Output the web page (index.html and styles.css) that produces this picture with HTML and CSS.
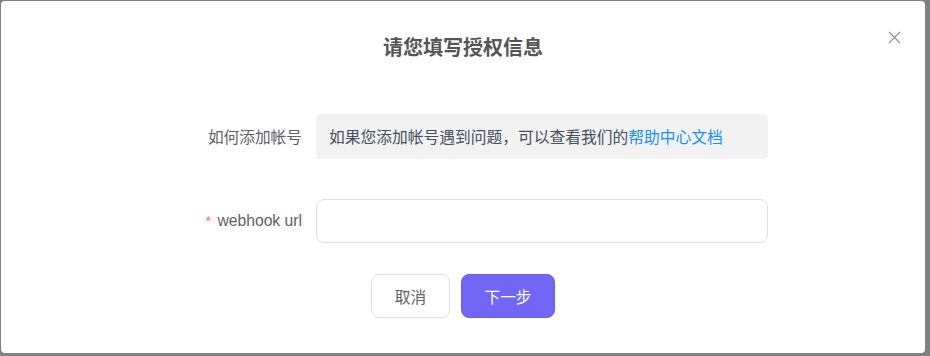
FILE: index.html
```html
<!DOCTYPE html>
<html lang="zh-CN">
<head>
    <meta charset="UTF-8">
    <meta name="viewport" content="width=device-width, initial-scale=1.0">
    <title>授权信息</title>
    <link rel="stylesheet" href="styles.css">
</head>
<body>
    <div class="modal">
        <div class="modal-header">
            <h2 class="modal-title">请您填写授权信息</h2>
            <button class="close-button" aria-label="关闭">
                <svg width="13" height="13" viewBox="0 0 13 13">
                    <path d="M1 1 L12 12 M12 1 L1 12" stroke="#909399" stroke-width="1.2" fill="none"/>
                </svg>
            </button>
        </div>

        <div class="form">
            <div class="form-row">
                <div class="form-label">如何添加帐号</div>
                <div class="help-box">
                    如果您添加帐号遇到问题，可以查看我们的<a href="#" class="help-link">帮助中心文档</a>
                </div>
            </div>
            <div class="form-row">
                <div class="form-label"><span class="required">*</span> webhook url</div>
                <input class="form-input" type="text">
            </div>
        </div>

        <div class="modal-footer">
            <button class="cancel-button">取消</button>
            <button class="next-button">下一步</button>
        </div>
    </div>
</body>
</html>
```

FILE: styles.css
```css
body {
    margin: 0;
    padding: 1px 0 0 1px;
    background: #808080;
    font-family: "Liberation Sans", "Noto Sans CJK SC", sans-serif;
    height: 100vh;
    box-sizing: border-box;
    overflow: hidden;
}

.modal {
    width: 924px;
    height: 352px;
    background: white;
    border-radius: 4px;
    box-sizing: border-box;
    padding-top: 28px;
}

.modal-header {
    position: relative;
    text-align: center;
}

.modal-title {
    margin: 0;
    font-size: 20px;
    line-height: 38px;
    font-weight: 700;
    color: #555;
}

.close-button {
    position: absolute;
    top: 2px;
    right: 24px;
    background: none;
    border: none;
    padding: 0;
    cursor: pointer;
}

.form {
    margin-top: 47px;
    padding-left: 181px;
    display: flex;
    flex-direction: column;
    gap: 40px;
}

.form-row {
    display: flex;
    align-items: center;
    gap: 14px;
}

.form-label {
    width: 120px;
    text-align: right;
    font-size: 15.7px;
    color: #606266;
    white-space: nowrap;
}

.required {
    color: #f56c6c;
    font-size: 14px;
    margin-right: 2px;
}

.help-box {
    width: 452px;
    height: 45px;
    box-sizing: border-box;
    padding: 0 13px;
    display: flex;
    align-items: center;
    background: #f2f2f2;
    border-radius: 4px;
    font-size: 15.75px;
    color: #454f60;
}

.help-link {
    color: #1890ff;
    text-decoration: none;
}

.form-input {
    width: 452px;
    height: 44px;
    box-sizing: border-box;
    border: 1px solid #dcdfe6;
    border-radius: 8px;
    padding: 0 12px;
    font-size: 14px;
    outline: none;
}

.modal-footer {
    margin-top: 31px;
    display: flex;
    justify-content: center;
    gap: 11px;
}

.cancel-button,
.next-button {
    height: 44px;
    border-radius: 8px;
    font-size: 15.7px;
    font-family: inherit;
    cursor: pointer;
}

.cancel-button {
    width: 79px;
    background: white;
    border: 1px solid #e0e0e0;
    color: #606266;
}

.next-button {
    width: 94px;
    background: #7166f6;
    border: 1px solid #6a5ee8;
    color: white;
}
```
